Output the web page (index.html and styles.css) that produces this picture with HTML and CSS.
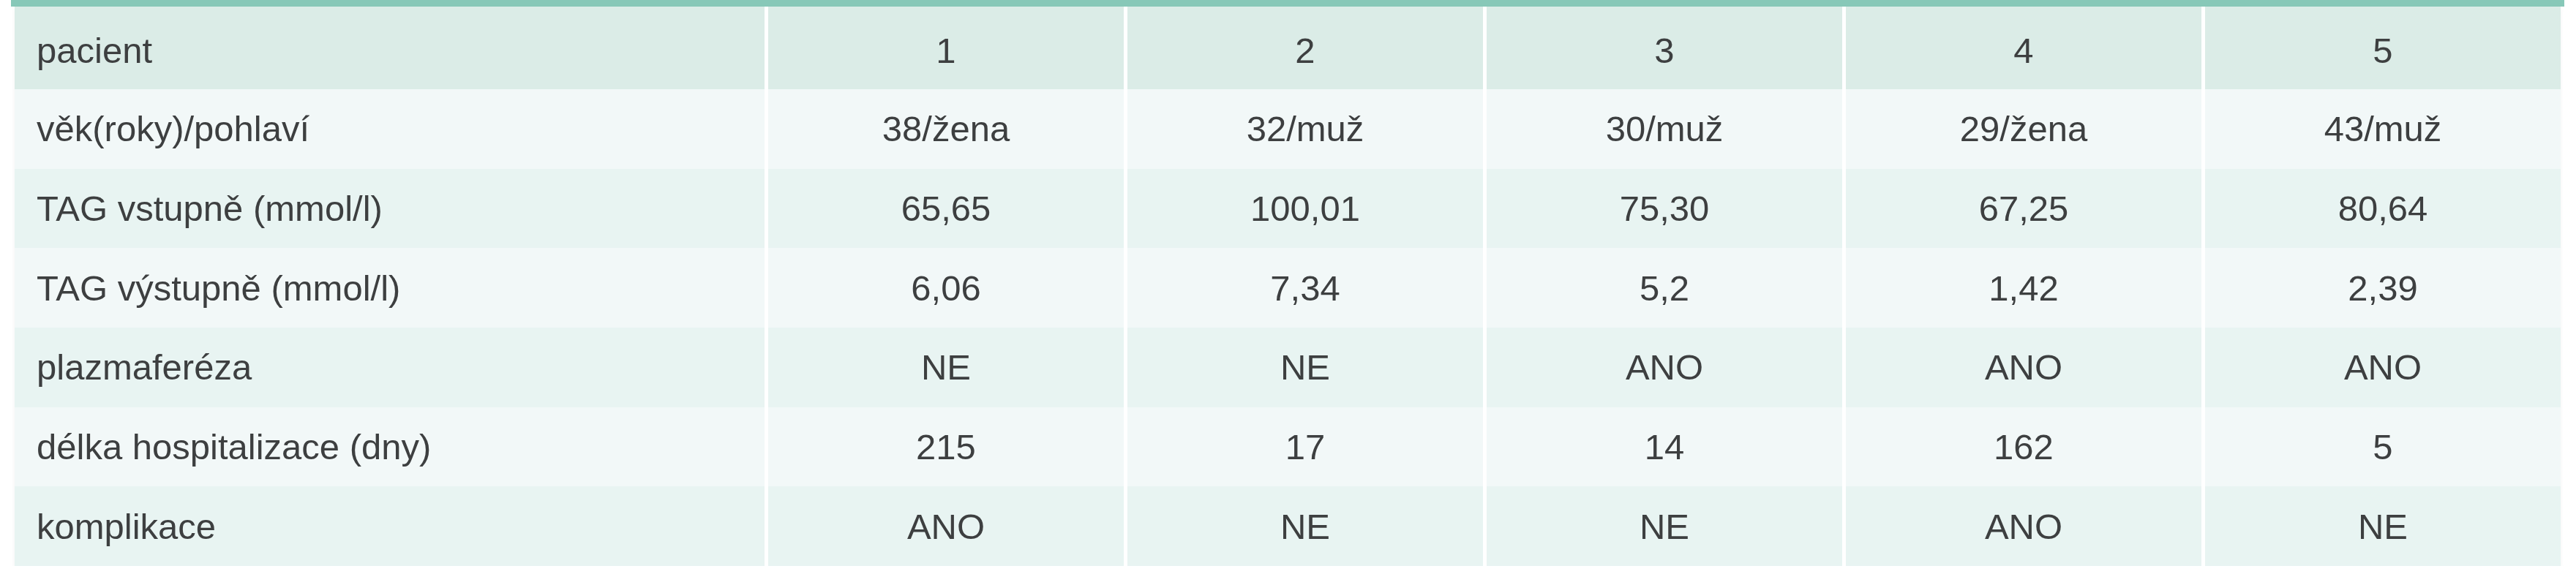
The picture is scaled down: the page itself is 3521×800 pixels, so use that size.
FILE: index.html
```html
<!DOCTYPE html>
<html lang="cs">
<head>
<meta charset="utf-8">
<title>Pacienti</title>
<link rel="stylesheet" href="styles.css">
</head>
<body>
<div class="page">
  <div class="topbar"></div>
  <table class="data">
    <colgroup>
      <col class="c-label">
      <col class="c-val">
      <col class="c-val">
      <col class="c-val">
      <col class="c-val">
      <col class="c-last">
    </colgroup>
    <thead>
      <tr class="head">
        <th class="label">pacient</th>
        <th>1</th><th>2</th><th>3</th><th>4</th><th>5</th>
      </tr>
    </thead>
    <tbody>
      <tr class="light">
        <td class="label">věk(roky)/pohlaví</td>
        <td>38/žena</td><td>32/muž</td><td>30/muž</td><td>29/žena</td><td>43/muž</td>
      </tr>
      <tr class="tint">
        <td class="label">TAG vstupně (mmol/l)</td>
        <td>65,65</td><td>100,01</td><td>75,30</td><td>67,25</td><td>80,64</td>
      </tr>
      <tr class="light">
        <td class="label">TAG výstupně (mmol/l)</td>
        <td>6,06</td><td>7,34</td><td>5,2</td><td>1,42</td><td>2,39</td>
      </tr>
      <tr class="tint">
        <td class="label">plazmaferéza</td>
        <td>NE</td><td>NE</td><td>ANO</td><td>ANO</td><td>ANO</td>
      </tr>
      <tr class="light">
        <td class="label">délka hospitalizace (dny)</td>
        <td>215</td><td>17</td><td>14</td><td>162</td><td>5</td>
      </tr>
      <tr class="tint">
        <td class="label">komplikace</td>
        <td>ANO</td><td>NE</td><td>NE</td><td>ANO</td><td>NE</td>
      </tr>
    </tbody>
  </table>
</div>
</body>
</html>
```

FILE: styles.css
```css
html, body {
  margin: 0;
  padding: 0;
  background: #ffffff;
}

.page {
  padding: 0 0 0 15px;
  font-family: "Liberation Sans", Arial, sans-serif;
  font-size: 49px;
  color: #3d3f40;
}

.topbar {
  width: 3490px;
  height: 9px;
  background: #87c8b8;
}

.data {
  margin-left: 5px;
  width: 3480px;
  table-layout: fixed;
  border-collapse: separate;
  border-spacing: 0;
  box-shadow: 0 3px 6px rgba(0, 0, 0, 0.05);
}

.c-label { width: 1030px; }
.c-val { width: 491px; }
.c-last { width: 486px; }

.data th,
.data td {
  padding: 0;
  font-weight: normal;
  text-align: center;
  vertical-align: middle;
  border-right: 5px solid #ffffff;
  white-space: nowrap;
}

.data th:last-child,
.data td:last-child {
  border-right: 0;
}

.data .label {
  text-align: left;
  padding-left: 30px;
}

.head th {
  height: 113px;
  background: #dbece7;
  padding-top: 6px;
  box-sizing: border-box;
}

.light td {
  height: 108.7px;
  background: #f2f8f8;
}

.tint td {
  height: 108.7px;
  background: #e8f4f2;
}
```
